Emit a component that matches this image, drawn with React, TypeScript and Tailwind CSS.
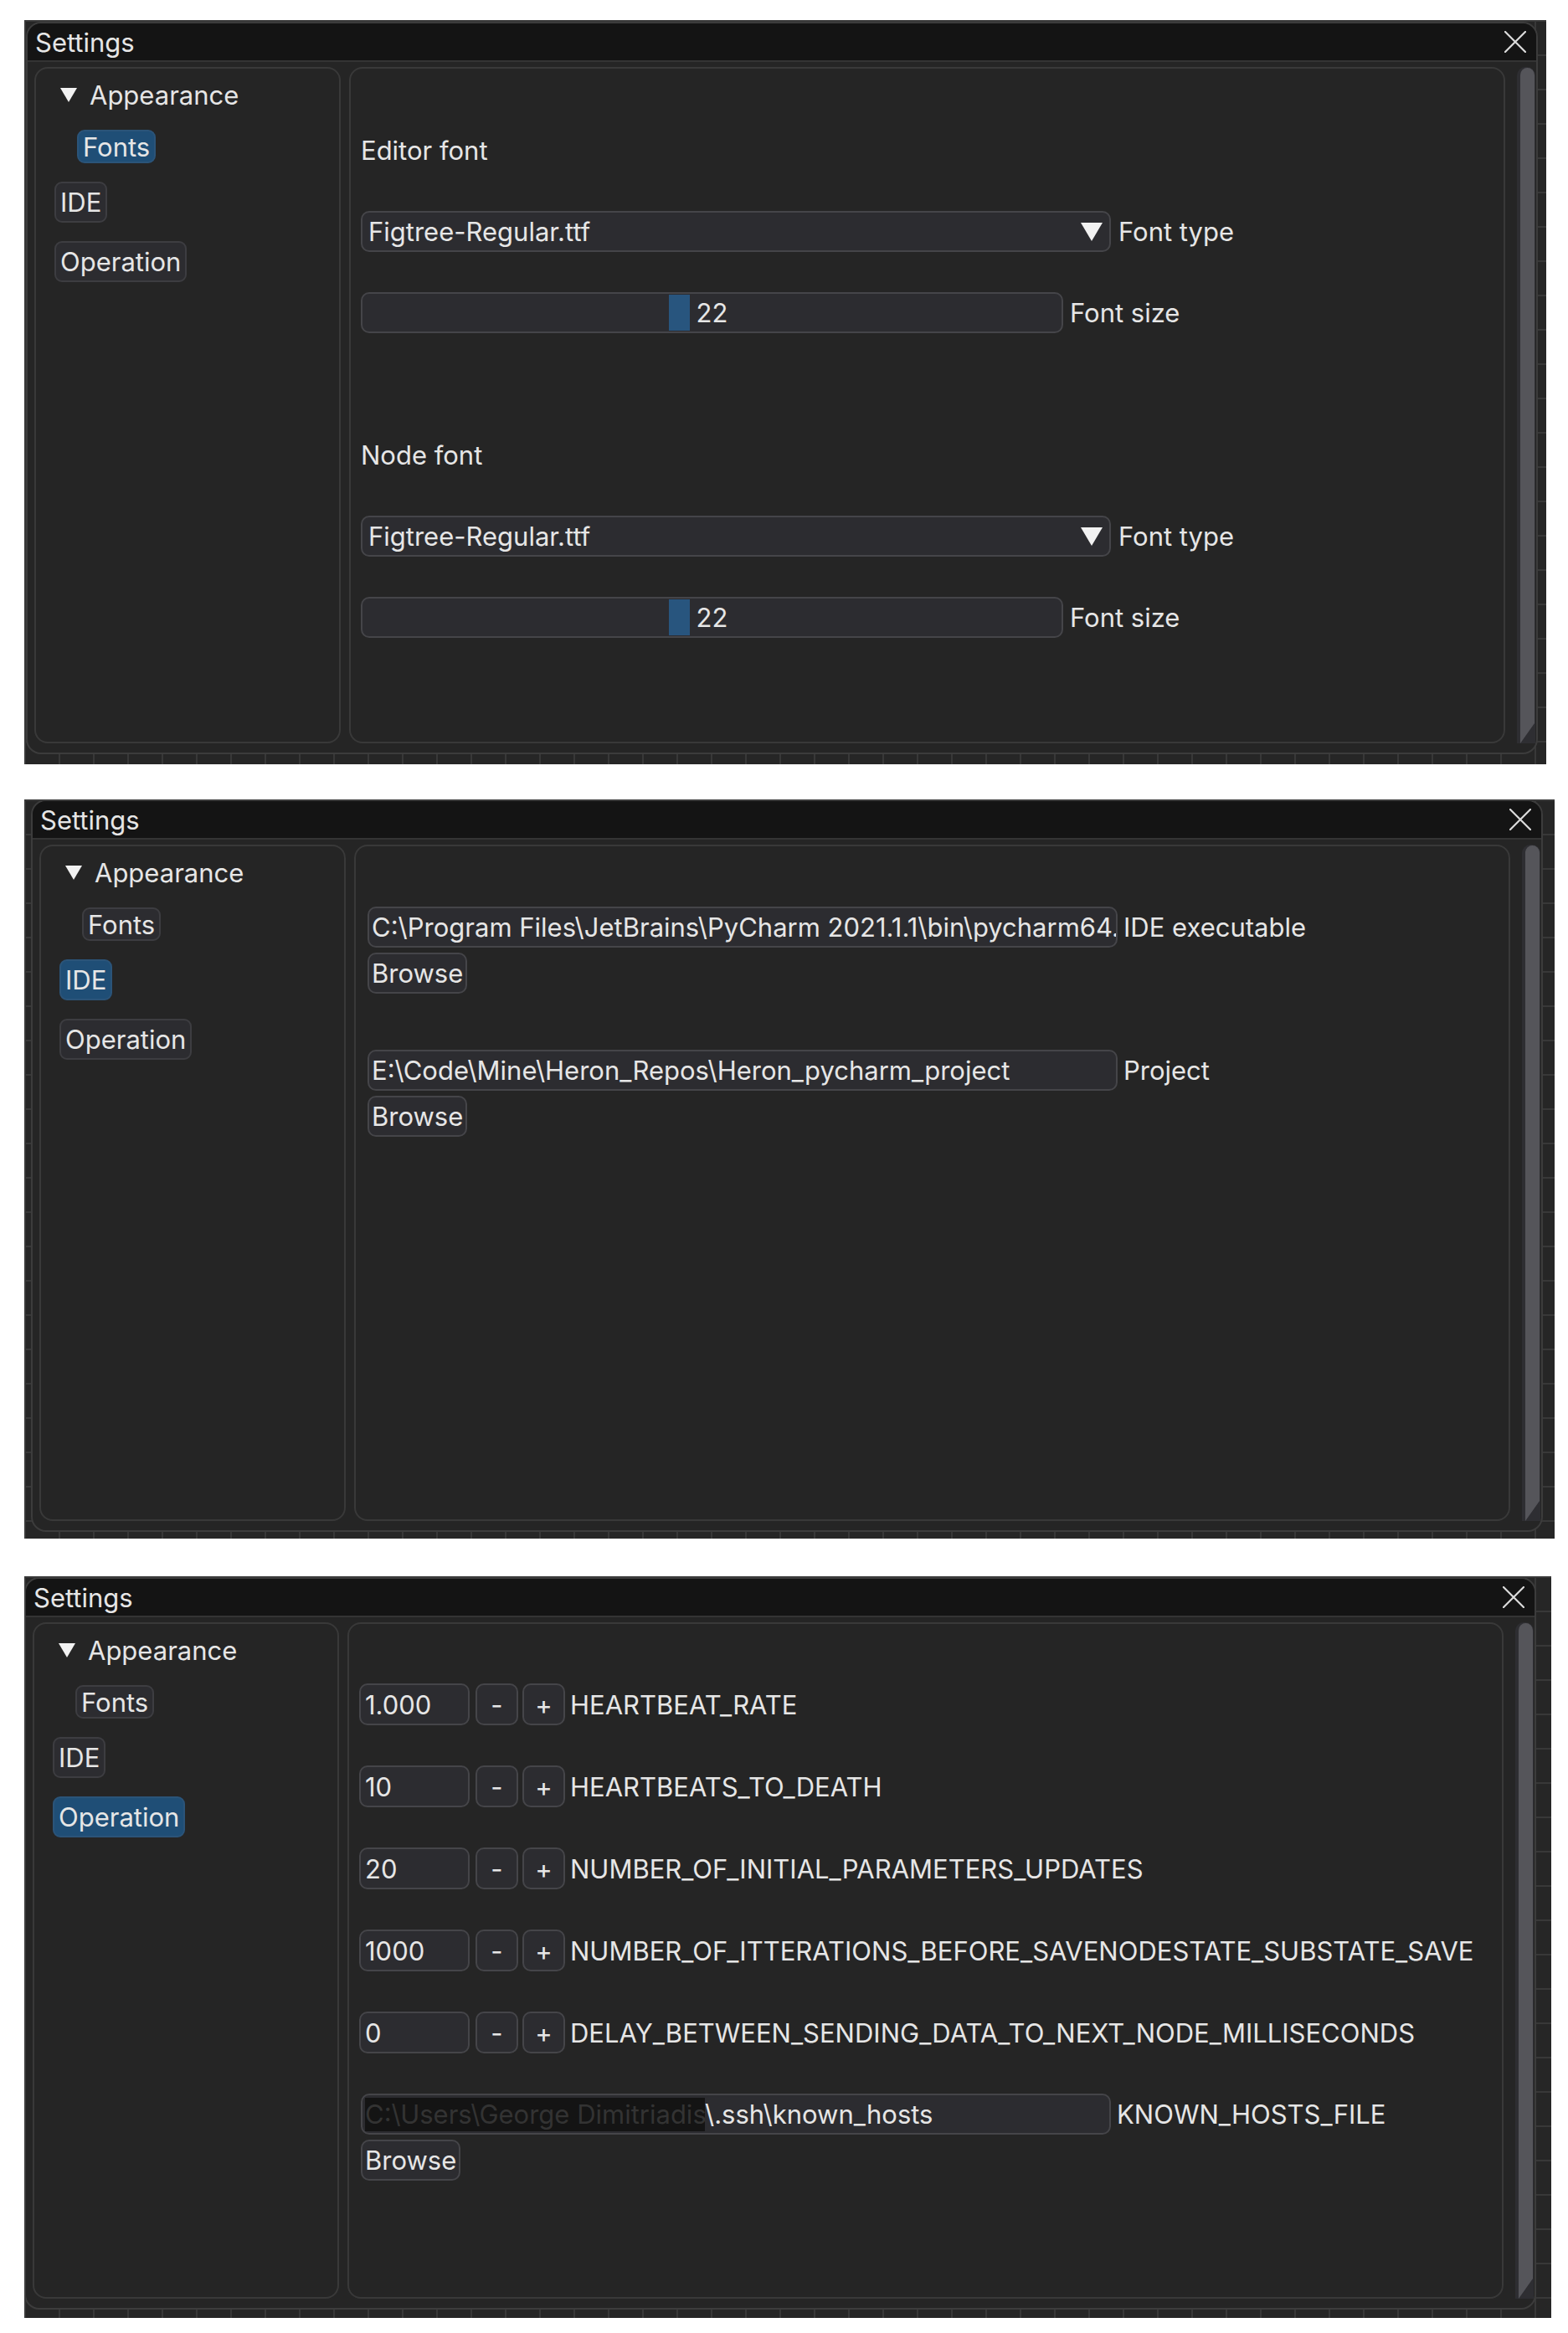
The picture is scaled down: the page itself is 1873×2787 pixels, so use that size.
import React from 'react';

type NavKey = 'Fonts' | 'IDE' | 'Operation';

const OPERATION_ROWS = [
  { value: '1.000', label: 'HEARTBEAT_RATE' },
  { value: '10', label: 'HEARTBEATS_TO_DEATH' },
  { value: '20', label: 'NUMBER_OF_INITIAL_PARAMETERS_UPDATES' },
  { value: '1000', label: 'NUMBER_OF_ITTERATIONS_BEFORE_SAVENODESTATE_SUBSTATE_SAVE' },
  { value: '0', label: 'DELAY_BETWEEN_SENDING_DATA_TO_NEXT_NODE_MILLISECONDS' },
];

function DownTriangle({ w, h }: { w: number; h: number }) {
  return (
    <svg width={w} height={h} viewBox={`0 0 ${w} ${h}`} className="shrink-0">
      <polygon points={`0,0 ${w},0 ${w / 2},${h}`} fill="#f2f2f2" />
    </svg>
  );
}

function CloseIcon() {
  return (
    <svg width="26" height="26" viewBox="0 0 26 26" className="shrink-0">
      <path d="M1 1 L25 25 M25 1 L1 25" stroke="#dcdcdc" strokeWidth="2.2" strokeLinecap="round" />
    </svg>
  );
}

function NavButton({ label, active, tall }: { label: string; active: boolean; tall?: boolean }) {
  return (
    <div
      className={`inline-flex items-center px-[5px] rounded-[9px] border-2 ${tall ? 'h-[49px]' : 'h-[40px]'} ${
        active ? 'bg-[#1f4e76] border-[#2b5479]' : 'bg-[#2c2c30] border-[#3d3d41]'
      }`}
    >
      {label}
    </div>
  );
}

function Sidebar({ active }: { active: NavKey }) {
  return (
    <div className="w-[366px] h-[808px] shrink-0 rounded-[16px] border-2 border-[#393939] flex flex-col items-start pt-[11px]">
      <div className="h-[40px] flex items-center pl-[29px] gap-[15px]">
        <DownTriangle w={20} h={17} />
        <span>Appearance</span>
      </div>
      <div className="mt-[22px] ml-[49px]">
        <NavButton label="Fonts" active={active === 'Fonts'} />
      </div>
      <div className="mt-[22px] ml-[22px]">
        <NavButton label="IDE" active={active === 'IDE'} tall />
      </div>
      <div className="mt-[22px] ml-[22px]">
        <NavButton label="Operation" active={active === 'Operation'} tall />
      </div>
    </div>
  );
}

function FontBlock({ title, first }: { title: string; first?: boolean }) {
  return (
    <>
      <div className={`h-[49px] flex items-center ${first ? 'mt-[73px]' : 'mt-[121px]'}`}>{title}</div>
      {/* font type combo */}
      <div className="mt-[48px] flex items-center">
        <div className="w-[896px] h-[49px] rounded-[10px] border-2 border-[#454549] bg-[#2c2c30] flex items-center justify-between pl-[7px] pr-[8px]">
          <span>Figtree-Regular.ttf</span>
          <DownTriangle w={26} h={22} />
        </div>
        <span className="ml-[9px]">Font type</span>
      </div>
      {/* font size slider */}
      <div className="mt-[48px] flex items-center">
        <div className="relative w-[839px] h-[49px] rounded-[10px] border-2 border-[#454549] bg-[#2c2c30] flex items-center justify-center">
          <div className="absolute left-[366px] top-[1px] bottom-[1px] w-[25px] bg-[#28557e]" />
          <span className="relative">22</span>
        </div>
        <span className="ml-[8px]">Font size</span>
      </div>
    </>
  );
}

function PathField({ children, label, className }: { children: React.ReactNode; label: string; className: string }) {
  return (
    <div className={`flex items-center ${className}`}>
      <div className="w-[896px] h-[49px] rounded-[10px] border-2 border-[#454549] bg-[#2c2c30] flex items-center pl-[3px] overflow-hidden whitespace-nowrap">
        {children}
      </div>
      <span className="ml-[7px]">{label}</span>
    </div>
  );
}

function BrowseButton() {
  return (
    <div className="mt-[6px] self-start h-[49px] rounded-[10px] border-2 border-[#454549] bg-[#2c2c30] flex items-center px-[3px]">
      Browse
    </div>
  );
}

function FontsContent() {
  return (
    <div className="flex flex-col pl-[12px]">
      <FontBlock title="Editor font" first />
      <FontBlock title="Node font" />
    </div>
  );
}

function IdeContent() {
  return (
    <div className="flex flex-col pl-[14px]">
      <PathField label="IDE executable" className="mt-[72px]">
        C:\Program Files\JetBrains\PyCharm 2021.1.1\bin\pycharm64.exe
      </PathField>
      <BrowseButton />
      <div className="mt-[67px]" />
      <PathField label="Project" className="">
        E:\Code\Mine\Heron_Repos\Heron_pycharm_project
      </PathField>
      <BrowseButton />
    </div>
  );
}

function OperationContent() {
  return (
    <div className="flex flex-col pl-[12px]">
      {OPERATION_ROWS.map((row, i) => (
        <div key={row.label} className={`h-[50px] flex items-center ${i === 0 ? 'mt-[71px]' : 'mt-[48px]'}`}>
          <div className="w-[132px] h-[50px] rounded-[10px] border-2 border-[#454549] bg-[#2c2c30] flex items-center pl-[5px]">
            {row.value}
          </div>
          <div className="ml-[7px] w-[51px] h-[50px] rounded-[10px] border-2 border-[#454549] bg-[#2c2c30] flex items-center justify-center">
            -
          </div>
          <div className="ml-[5px] w-[51px] h-[50px] rounded-[10px] border-2 border-[#454549] bg-[#2c2c30] flex items-center justify-center">
            +
          </div>
          <span className="ml-[6px]">{row.label}</span>
        </div>
      ))}
      <div className="pl-[2px] flex flex-col">
        <PathField label="KNOWN_HOSTS_FILE" className="mt-[48px]">
          <span className="w-[406px] h-[40px] shrink-0 bg-[#141414] text-[#333333] flex items-center overflow-hidden">
            C:\Users\George Dimitriadis
          </span>
          <span>\.ssh\known_hosts</span>
        </PathField>
        <BrowseButton />
      </div>
    </div>
  );
}

function Scrollbar() {
  return (
    <div className="ml-[14px] w-[22px] h-[808px] shrink-0 bg-[#2e2e32] rounded-t-[10px] pl-[4px] pr-[1px] pt-[1px]">
      <div className="h-full bg-[#55555a] rounded-t-full [clip-path:polygon(0_0,100%_0,100%_calc(100%-24px),0_100%)]" />
    </div>
  );
}

function SettingsWindow({ active }: { active: NavKey }) {
  return (
    <div className="w-[1806px] h-[875px] rounded-[18px] border-2 border-[#3c3c3c] bg-[#252525] overflow-hidden flex flex-col shrink-0">
      <div className="h-[46px] shrink-0 bg-[#141414] border-b-2 border-[#343434] flex items-center justify-between pl-[9px] pr-[12px]">
        <span>Settings</span>
        <CloseIcon />
      </div>
      <div className="flex pt-[6px] pl-[8px]">
        <Sidebar active={active} />
        <div className="ml-[10px] w-[1381px] h-[808px] shrink-0 rounded-[16px] border-2 border-[#393939]">
          {active === 'Fonts' && <FontsContent />}
          {active === 'IDE' && <IdeContent />}
          {active === 'Operation' && <OperationContent />}
        </div>
        <Scrollbar />
      </div>
    </div>
  );
}

// Node-editor grid that peeks out around each settings window
function Shot({ className, active }: { className: string; active: NavKey }) {
  return (
    <div
      className={`bg-[#262626] bg-[linear-gradient(to_right,#383838_2px,transparent_2px),linear-gradient(to_bottom,#383838_2px,transparent_2px)] bg-[size:41px_41px] overflow-hidden ${className}`}
    >
      <SettingsWindow active={active} />
    </div>
  );
}

export default function App() {
  return (
    <div className="w-[1873px] min-h-[2787px] bg-white pl-[29px] pt-[24px] flex flex-col font-['Inter','Liberation_Sans',sans-serif] text-[31px] leading-none text-[#e6e6e6]">
      <Shot className="w-[1818px] h-[889px] pl-[2px] pt-[2px]" active="Fonts" />
      <Shot className="mt-[42px] w-[1828px] h-[883px] pl-[8px] pt-[0px]" active="IDE" />
      <Shot className="mt-[45px] w-[1824px] h-[886px] pl-[0px] pt-[1px]" active="Operation" />
    </div>
  );
}
